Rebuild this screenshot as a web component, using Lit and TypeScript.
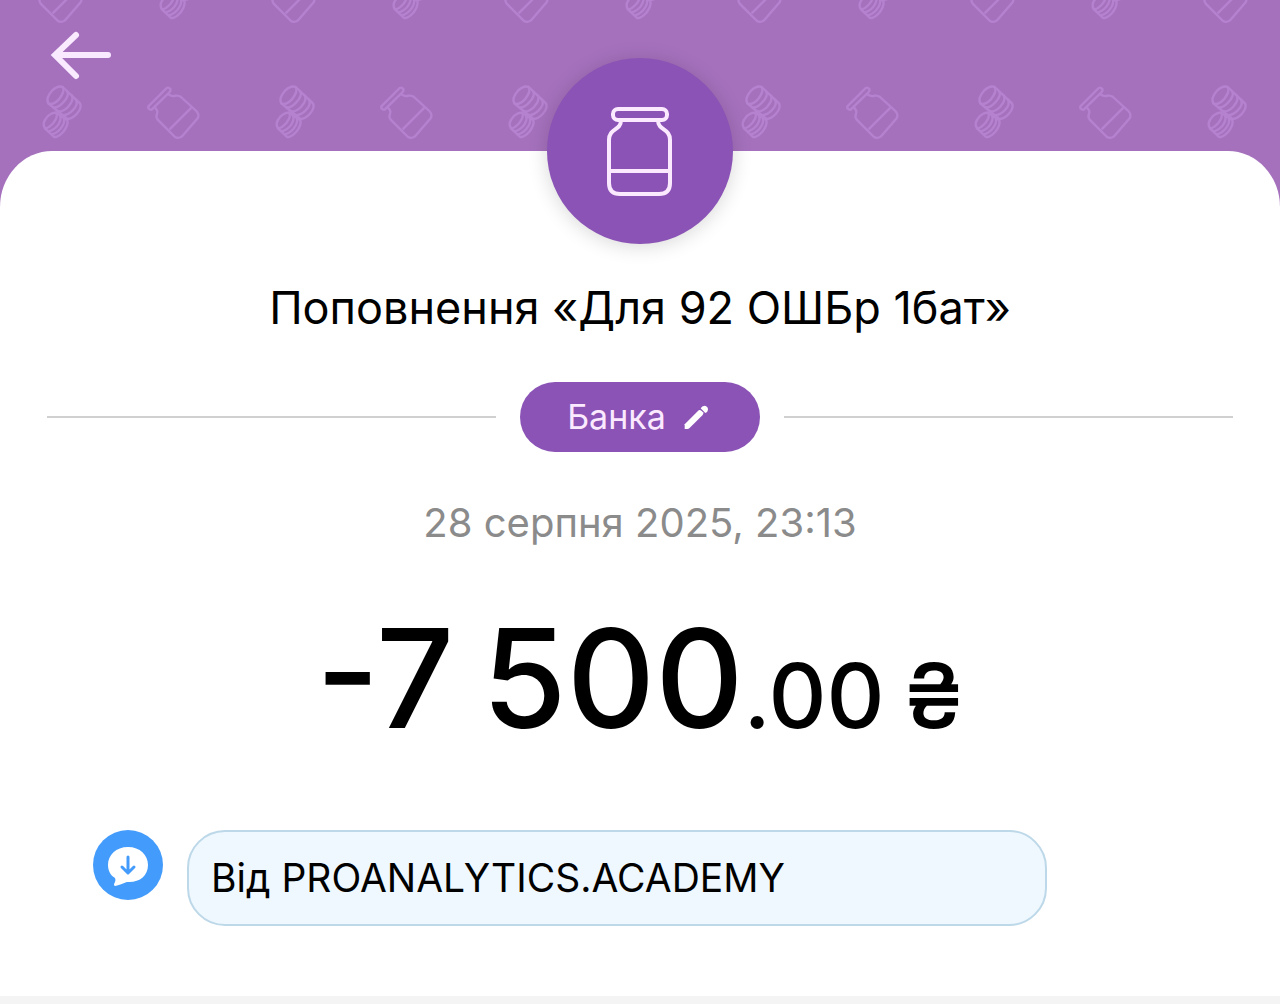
import { LitElement, html, css, svg } from "lit";
import { customElement, property } from "lit/decorators.js";

const jar = svg`
  <path d="M40 94 L95 39 Q101 36 106 42 Q108 47 104 51 L50 104 Q44 105 40 100 Z"></path>
  <path d="M100 58 Q112 66 122 62 Q132 61 138 66 L184 108 Q194 118 188 130 L140 185 Q130 192 120 186 L68 134 Q62 126 66 116 Q70 108 60 98"></path>
  <path d="M167 100 L106 161"></path>`;

const coins = svg`
  <path d="M55 85 Q46 70 66 47 Q84 30 98 36 Q106 50 86 74 Q68 92 55 85 Z"></path>
  <path d="M98 36 L150 85 Q157 98 140 117 Q126 132 112 132 L55 85"></path>
  <path d="M112 50 Q118 62 100 82 Q84 100 70 97 M126 62 Q132 76 114 96 Q98 112 84 109 M138 74 Q146 88 128 106 Q112 122 98 120"></path>
  <path d="M45 160 Q34 145 52 125 Q66 112 78 113 Q86 124 70 144 Q56 160 45 160 Z"></path>
  <path d="M78 113 L112 135 Q116 150 100 170 Q86 186 72 186 L45 160 M90 122 Q96 134 81 154 Q68 168 55 169 M101 129 Q107 142 91 162 Q78 177 64 178"></path>`;

@customElement("header-pattern")
export class HeaderPattern extends LitElement {
  static styles = css`
    :host { display: block; }
    .pattern { display: block; width: 100%; height: 100%; }
    .marks { fill: none; stroke: #b582d0; stroke-width: 7; stroke-linejoin: round; stroke-linecap: round; }
  `;
  render() {
    return html`<svg class="pattern" aria-hidden="true">
      <defs>
        <pattern id="tile" width="233" height="234" patternUnits="userSpaceOnUse">
          <g class="marks">
            <g transform="translate(135 75) scale(.3333)">${jar}</g>
            <g transform="translate(18 -41) scale(.3333)">${jar}</g>
            <g transform="translate(30 75) scale(.3333)">${coins}</g>
            <g transform="translate(147 -44) scale(.3333)">${coins}</g>
          </g>
        </pattern>
      </defs>
      <rect width="100%" height="100%" fill="url(#tile)"></rect>
    </svg>`;
  }
}

@customElement("category-pill")
export class CategoryPill extends LitElement {
  @property() label = "";
  static styles = css`
    :host { display: block; }
    .pill {
      display: flex; align-items: center; justify-content: center; gap: 18px;
      padding: 15px 50px 15px 46px; border: 0; border-radius: 35px;
      min-width: 240px; background: #8a53b5; color: #fbeaff; cursor: pointer;
      font: 400 34px/40px Inter, "Liberation Sans", sans-serif;
    }
    .pencil { width: 25px; height: 25px; fill: #fff; }
  `;
  render() {
    return html`<button class="pill" type="button">
      <span>${this.label}</span>
      <svg class="pencil" viewBox="42 28 75 75" aria-hidden="true">
        <path d="M44 100 V86 L86 44 Q90 41 94 45 L99 50 Q102 54 98 58 L58 98 Q56 100 52 100 Z"></path>
        <path d="M92 38 Q96 30 104 30 Q114 32 114 42 Q113 50 106 52 Z"></path>
      </svg>
    </button>`;
  }
}

@customElement("app-root")
export class AppRoot extends LitElement {
  static styles = css`
    :host {
      display: block; min-height: 100vh; background: #f4f4f4; color: #000;
      font-family: Inter, "Liberation Sans", sans-serif;
    }
    .page { display: flex; flex-direction: column; min-height: 100vh; box-sizing: border-box; padding-bottom: 8px; }
    .hero { display: grid; height: 248px; margin-bottom: -97px; background: #a571bd; }
    .hero > * { grid-area: 1 / 1; }
    .marks { height: 151px; }
    .back {
      z-index: 1; justify-self: start; align-self: start; width: 72px; height: 60px;
      margin: 25px 0 0 45px; padding: 0; border: 0; background: none; cursor: pointer;
    }
    .back svg { display: block; width: 72px; height: 60px; fill: none; stroke: #f9eaff; stroke-width: 6; stroke-linecap: round; stroke-linejoin: miter; }
    .sheet {
      flex: 1; display: flex; flex-direction: column; align-items: center; z-index: 1;
      background: #fff; border-radius: 52px 52px 0 0 / 56px 56px 0 0;
    }
    .avatar {
      display: grid; place-items: center; width: 186px; height: 186px; margin-top: -93px;
      border-radius: 50%; background: #8a53b5; box-shadow: 0 2px 20px rgb(0 0 0 / 16%);
    }
    .avatar svg { width: 72px; height: 96px; fill: none; stroke: #fbeaff; stroke-width: 4; stroke-linejoin: round; }
    .title { margin: 36px 0 0; font-size: 45px; line-height: 56px; font-weight: 400; text-align: center; }
    .divider { align-self: stretch; display: flex; align-items: center; gap: 24px; margin: 46px 47px 0; }
    .line { flex: 1; height: 2px; background: #d0d0d0; }
    .date { margin: 47px 0 0; font-size: 40px; line-height: 48px; color: #8b8b8b; }
    .amount { margin: 48px 0 0; font-size: 137px; line-height: 166px; font-weight: 500; white-space: nowrap; }
    .thousands { font-size: 104px; }
    .minor { font-size: 90px; }
    .gap { font-size: 72px; }
    .comment { align-self: stretch; display: flex; align-items: flex-start; gap: 24px; margin: 45px 233px 69px 93px; }
    .badge { width: 70px; height: 70px; flex: none; }
    .bubble {
      flex: 1; margin: 0; padding: 22px; border: 2px solid #bdd8e8; border-radius: 38px;
      background: #eff8ff; font-size: 39px; line-height: 48px;
    }
  `;
  render() {
    return html`<main class="page">
      <header class="hero">
        <header-pattern class="marks"></header-pattern>
        <button class="back" type="button" aria-label="Назад">
          <svg viewBox="45 25 72 60" aria-hidden="true"><path d="M76 35 L55 55 L76 76 M56 55 H108"></path></svg>
        </button>
      </header>
      <section class="sheet">
        <div class="avatar">
          <svg viewBox="604 103 72 96" aria-hidden="true">
            <rect x="613" y="109" width="54" height="11" rx="5"></rect>
            <path d="M621 120 C621 131 609 128 609 140 V183 Q609 194 620 194 H659 Q670 194 670 183 V140 C670 128 658 131 658 120 M609 171 H670"></path>
          </svg>
        </div>
        <h1 class="title">Поповнення «Для 92 ОШБр 1бат»</h1>
        <div class="divider">
          <span class="line"></span>
          <category-pill label="Банка"></category-pill>
          <span class="line"></span>
        </div>
        <p class="date">28 серпня 2025, 23:13</p>
        <p class="amount">-7<span class="thousands"> </span>500<span class="minor">.00<span class="gap"> </span>₴</span></p>
        <div class="comment">
          <svg class="badge" viewBox="0 0 70 70" aria-hidden="true">
            <circle cx="35" cy="35" r="35" fill="#439bfb"></circle>
            <path fill="#fff" d="M35 17 C47 17 55 25 55 35 C55 46 46 53 34 52 C30 53 28 55 22 56 Q20 55 22 52 Q23 50 22 48 C17 45 15 40 15 35 C15 25 23 17 35 17 Z"></path>
            <path fill="none" stroke="#439bfb" stroke-width="3" stroke-linecap="round" stroke-linejoin="round" d="M35 27 V43 M29 37 L35 43 L41 37"></path>
          </svg>
          <p class="bubble">Від PROANALYTICS.ACADEMY</p>
        </div>
      </section>
    </main>`;
  }
}
